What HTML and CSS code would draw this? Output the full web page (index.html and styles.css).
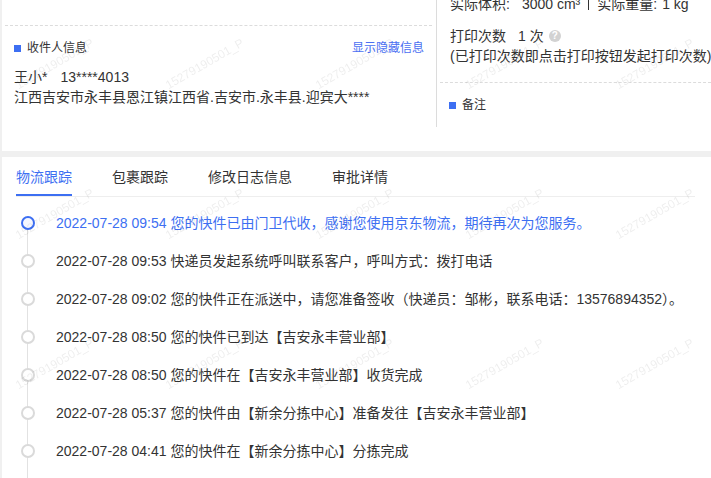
FILE: index.html
```html
<!DOCTYPE html>
<html lang="zh-CN">
<head>
<meta charset="utf-8">
<title>物流详情</title>
<link rel="stylesheet" href="styles.css">
</head>
<body>
<div class="page">
  <section class="top-card">
    <div class="col-left">
      <div class="prev-section"></div>
      <div class="section">
        <div class="sec-head">
          <span class="sec-title"><i class="sq"></i>收件人信息</span>
          <a class="link">显示隐藏信息</a>
        </div>
        <div class="line name"><span>王小*</span><span class="phone">13****4013</span></div>
        <div class="line">江西吉安市永丰县恩江镇江西省.吉安市.永丰县.迎宾大****</div>
      </div>
    </div>
    <div class="col-right">
      <div class="info">
        <div class="line">实际体积:<span class="val">3000 cm³</span><span class="sep"></span>实际重量:<span class="val val-tight">1 kg</span></div>
        <div class="line print">打印次数<span class="val">1 次</span><span class="help">?</span></div>
        <div class="line">(已打印次数即点击打印按钮发起打印次数)</div>
      </div>
      <div class="section section-right">
        <div class="sec-title"><i class="sq"></i>备注</div>
      </div>
    </div>
  </section>

  <section class="track-card">
    <nav class="tabs">
      <span class="tab active">物流跟踪</span>
      <span class="tab">包裹跟踪</span>
      <span class="tab">修改日志信息</span>
      <span class="tab">审批详情</span>
    </nav>
    <ul class="timeline">
      <li class="item current"><span class="rail"><i class="dot"></i></span><span class="text">2022-07-28 09:54 您的快件已由门卫代收，感谢您使用京东物流，期待再次为您服务。</span></li>
      <li class="item"><span class="rail"><i class="dot"></i></span><span class="text">2022-07-28 09:53 快递员发起系统呼叫联系客户，呼叫方式：拨打电话</span></li>
      <li class="item"><span class="rail"><i class="dot"></i></span><span class="text">2022-07-28 09:02 您的快件正在派送中，请您准备签收（快递员：邹彬，联系电话：13576894352）。</span></li>
      <li class="item"><span class="rail"><i class="dot"></i></span><span class="text">2022-07-28 08:50 您的快件已到达【吉安永丰营业部】</span></li>
      <li class="item"><span class="rail"><i class="dot"></i></span><span class="text">2022-07-28 08:50 您的快件在【吉安永丰营业部】收货完成</span></li>
      <li class="item"><span class="rail"><i class="dot"></i></span><span class="text">2022-07-28 05:37 您的快件由【新余分拣中心】准备发往【吉安永丰营业部】</span></li>
      <li class="item last"><span class="rail"><i class="dot"></i></span><span class="text">2022-07-28 04:41 您的快件在【新余分拣中心】分拣完成</span></li>
    </ul>
  </section>
</div>

<div class="watermarks" aria-hidden="true">
  <span class="wm">15279190501_P</span><span class="wm">15279190501_P</span><span class="wm">15279190501_P</span><span class="wm">15279190501_P</span><span class="wm">15279190501_P</span>
  <span class="wm">15279190501_P</span><span class="wm">15279190501_P</span><span class="wm">15279190501_P</span><span class="wm">15279190501_P</span><span class="wm">15279190501_P</span>
  <span class="wm">15279190501_P</span><span class="wm">15279190501_P</span><span class="wm">15279190501_P</span><span class="wm">15279190501_P</span><span class="wm">15279190501_P</span>
</div>
</body>
</html>
```

FILE: styles.css
```css
html, body {
  margin: 0;
  padding: 0;
  overflow: hidden;
  height: 100%;
  background: #f0f0f0;
}

body {
  font-family: "Liberation Sans", "Noto Sans CJK SC", sans-serif;
  font-size: 14px;
  color: #333;
  display: flow-root;
}

.page {
  padding-left: 2px;
  margin-top: -16px;
}

/* ---------- top card ---------- */
.top-card {
  display: flex;
  background: #fff;
  padding-bottom: 24px;
}

.col-left {
  width: 435px;
  flex: none;
  box-sizing: border-box;
  border-right: 1px solid #dcdcdc;
}

.prev-section {
  height: 41px;
  margin: 0 4px 0 3px;
  border-bottom: 1px dashed #dcdcdc;
}

.section {
  padding: 12px 12px 20px 12px;
}

.sec-head {
  display: flex;
  justify-content: space-between;
  align-items: center;
  line-height: 20px;
}

.sec-title {
  display: flex;
  align-items: center;
  font-size: 12px;
  line-height: 20px;
  color: #333;
}

.sq {
  width: 7px;
  height: 7px;
  background: #3d6ff2;
  margin-right: 6px;
  flex: none;
}

.link {
  font-size: 12px;
  color: #4a6ff2;
  cursor: pointer;
}

.line {
  line-height: 20px;
  white-space: nowrap;
}

.name {
  margin-top: 9px;
}

.phone {
  margin-left: 13px;
}

.col-right {
  flex: 1;
  padding-top: 10px;
  min-width: 0;
}

.info {
  margin-left: 3px;
  padding: 0 0 16px 10px;
  border-bottom: 1px dashed #dcdcdc;
}

.val {
  margin-left: 12px;
}

.val-tight {
  margin-left: 5px;
}

.sep {
  display: inline-block;
  width: 0;
  height: 13px;
  border-left: 1px solid #333;
  margin: 0 8px;
  vertical-align: -1px;
}

.print {
  margin-top: 12px;
  display: flex;
  align-items: center;
}

.help {
  display: inline-flex;
  justify-content: center;
  align-items: center;
  width: 12px;
  height: 12px;
  border-radius: 50%;
  background: #d2d2d2;
  color: #fff;
  font-size: 10px;
  font-weight: bold;
  line-height: 1;
  margin-left: 5px;
}

.section-right {
  padding: 12px 0 12px 12px;
}

/* ---------- tracking card ---------- */
.track-card {
  margin-top: 6px;
  background: #fff;
  padding-top: 10px;
  padding-bottom: 8px;
}

.tabs {
  display: flex;
  gap: 40px;
  margin: 0 16px 0 14px;
  border-bottom: 1px solid #eeeeee;
}

.tab {
  line-height: 20px;
  padding-bottom: 7px;
  border-bottom: 2px solid transparent;
  color: #333;
  white-space: nowrap;
}

.tab.active {
  color: #3d6ff2;
  border-bottom-color: #3d6ff2;
}

.timeline {
  list-style: none;
  margin: 7px 0 0 0;
  padding: 0;
}

.item {
  display: flex;
  align-items: center;
  height: 38px;
}

.rail {
  position: relative;
  width: 50px;
  align-self: stretch;
  flex: none;
  display: flex;
  justify-content: center;
  align-items: center;
}

.rail::before {
  content: "";
  position: absolute;
  left: 25px;
  top: 0;
  bottom: 0;
  width: 1px;
  background: #e2e2e2;
}

.current .rail::before {
  top: 50%;
}

.last .rail::before {
  bottom: -8px;
}

.dot {
  position: relative;
  width: 10px;
  height: 10px;
  border: 2px solid #dadada;
  border-radius: 50%;
  background: #fff;
  margin-left: 1px;
}

.current .dot {
  border-color: #3d6ff2;
  background: #f5f7ff;
}

.text {
  margin-left: 4px;
  line-height: 20px;
  white-space: nowrap;
}

.current .text {
  color: #3d6ff2;
}

/* ---------- watermark overlay ---------- */
.watermarks {
  position: fixed;
  inset: 0;
  pointer-events: none;
  overflow: hidden;
  display: grid;
  grid-template-columns: repeat(5, 150px);
  grid-auto-rows: 150px;
  padding: 78px 0 0 20px;
}

.wm {
  align-self: start;
  justify-self: start;
  font-family: "Liberation Sans", sans-serif;
  font-size: 12px;
  line-height: 14px;
  color: rgba(0, 0, 0, 0.07);
  white-space: nowrap;
  transform: rotate(-30deg);
  transform-origin: 0 100%;
}
```
